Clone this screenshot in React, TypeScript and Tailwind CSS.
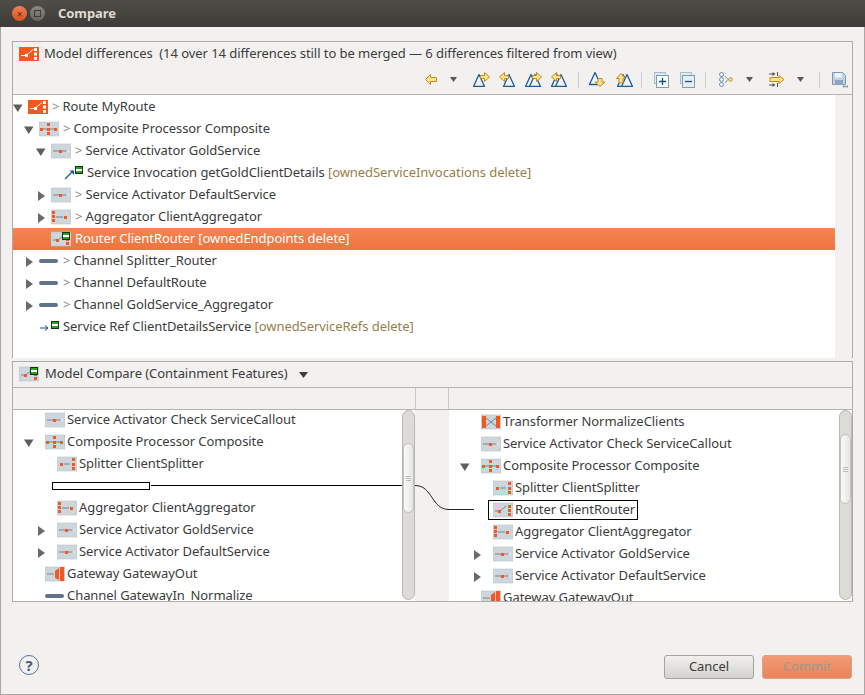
import type { ReactNode } from "react";

type IconKind =
  | "route"
  | "composite"
  | "activator"
  | "aggregator"
  | "splitter"
  | "router"
  | "gateway"
  | "transformer"
  | "channel"
  | "invocation"
  | "serviceRef";

function DeleteMark({ x = 11, y = 1 }: { x?: number; y?: number }) {
  return (
    <g>
      <rect x={x} y={y} width="8" height="8" fill="#0a3a0a" />
      <rect x={x + 1} y={y + 1} width="6" height="6" fill="#2fa01f" />
      <rect x={x + 1} y={y + 3} width="6" height="2" fill="#ffffff" />
    </g>
  );
}

function Dot({ x, y, s = 3 }: { x: number; y: number; s?: number }) {
  return <rect x={x} y={y} width={s} height={s} fill="#f4581f" />;
}

function ModelIcon({ kind, del }: { kind: IconKind; del?: boolean }) {
  return (
    <svg width="20" height="16" viewBox="0 0 20 16" className="shrink-0">
      {kind === "route" && (
        <g>
          <rect x="0" y="1" width="20" height="14" fill="#f4581f" />
          <path d="M2 9.500h5l7-6" stroke="#fff" strokeWidth="1" fill="none" />
          <rect x="6" y="8" width="3" height="3" fill="#fff" />
          <rect x="15" y="2" width="3" height="3" fill="#fff" />
          <rect x="15" y="6.500" width="3" height="3" fill="#fff" />
          <rect x="15" y="11" width="3" height="3" fill="#fff" />
        </g>
      )}
      {kind !== "route" && kind !== "channel" && kind !== "invocation" && kind !== "serviceRef" && (
        <rect x="0" y="1" width="20" height="14" fill="#cdd6dc" stroke="#b7c2c9" strokeWidth="0.6" />
      )}
      {kind === "composite" && (
        <g>
          <path d="M2 8h16" stroke="#77838c" strokeWidth="1" />
          <Dot x={1} y={7} />
          <Dot x={8} y={2} />
          <Dot x={8} y={7} />
          <Dot x={8} y={11} />
          <Dot x={15} y={7} />
        </g>
      )}
      {kind === "activator" && (
        <g>
          <path d="M2 8h14" stroke="#77838c" strokeWidth="1" />
          <Dot x={8} y={7} />
          <circle cx="17" cy="8" r="1.500" fill="#dfe4e7" />
        </g>
      )}
      {kind === "aggregator" && (
        <g>
          <Dot x={1} y={2} />
          <Dot x={1} y={6} />
          <Dot x={1} y={10} />
          <path d="M5 8h7" stroke="#77838c" strokeWidth="1" />
          <Dot x={13} y={7} />
        </g>
      )}
      {kind === "splitter" && (
        <g>
          <Dot x={3} y={7} />
          <path d="M7 8h6" stroke="#77838c" strokeWidth="1" />
          <Dot x={15} y={2} />
          <Dot x={15} y={7} />
          <Dot x={15} y={11} />
        </g>
      )}
      {kind === "router" && (
        <g>
          <path d="M2 9h5l6-5" stroke="#77838c" strokeWidth="1" fill="none" />
          <Dot x={5} y={8} />
          <Dot x={15} y={3} />
          <Dot x={15} y={7} />
          <Dot x={15} y={11} />
        </g>
      )}
      {kind === "gateway" && (
        <g>
          <path d="M2 8h7" stroke="#77838c" strokeWidth="1" />
          <path d="M10 5l4-3v12l-4-2z" fill="#f4581f" />
          <rect x="15" y="1" width="4" height="14" fill="#f4581f" />
        </g>
      )}
      {kind === "transformer" && (
        <g>
          <rect x="1" y="2" width="4" height="12" fill="#f4581f" />
          <rect x="15" y="2" width="4" height="12" fill="#f4581f" />
          <path d="M5 4l10 8M5 12l10-8" stroke="#77838c" strokeWidth="1" />
        </g>
      )}
      {kind === "channel" && <rect x="0" y="6" width="19" height="4" rx="2" fill="#5d7489" />}
      {kind === "invocation" && (
        <g>
          <path d="M1 14L9 6" stroke="#1f5d9c" strokeWidth="1.300" />
          <path d="M5.500 5.500h4.500v4.500z" fill="#1f5d9c" />
          <DeleteMark x={11} y={1} />
        </g>
      )}
      {kind === "serviceRef" && (
        <g>
          <path d="M0 9h7" stroke="#27406b" strokeWidth="1" />
          <path d="M5 6.500l3 2.500-3 2.500" stroke="#27406b" strokeWidth="1" fill="none" />
          <DeleteMark x={11} y={2} />
        </g>
      )}
      {del && kind !== "invocation" && kind !== "serviceRef" && <DeleteMark />}
    </svg>
  );
}

function Twisty({ open }: { open?: boolean }) {
  return (
    <svg width="10" height="10" viewBox="0 0 10 10" className="mt-[1px] shrink-0">
      {open ? <path d="M0 1.500h9.500L4.800 9z" fill="#5e5e5e" /> : <path d="M2 0v10L9 5z" fill="#6a6a6a" />}
    </svg>
  );
}

function TreeRow({
  left,
  icon,
  open,
  hasTwisty,
  del,
  selected,
  slot = "w-[15px]",
  gap = "ml-[4px]",
  children,
}: {
  left: string;
  icon: IconKind;
  open?: boolean;
  hasTwisty?: boolean;
  del?: boolean;
  selected?: boolean;
  slot?: string;
  gap?: string;
  children: ReactNode;
}) {
  return (
    <div className={`flex h-[22px] items-center whitespace-nowrap ${left} ${selected ? "bg-gradient-to-b from-[#f58550] to-[#ee7340] text-white" : ""}`}>
      <span className={`flex shrink-0 items-center ${slot}`}>{hasTwisty && <Twisty open={open} />}</span>
      <ModelIcon kind={icon} del={del} />
      <span className={gap}>{children}</span>
    </div>
  );
}

// rows of the two lower trees: wider twisty slot, tighter label
function CompareRow(props: { left: string; icon: IconKind; open?: boolean; hasTwisty?: boolean; children: ReactNode }) {
  return <TreeRow {...props} slot="w-[21px]" gap="ml-[2px]" />;
}

function Gt() {
  return <span className="mr-[3px] text-[#8a8a80]">&gt;</span>;
}

function Change({ children }: { children: ReactNode }) {
  return <span className="text-[#96804a]">{children}</span>;
}

function Tri({ x }: { x: number }) {
  return <path d={`M${x + 0.5} 14.500l5.500-12 5.500 12z`} fill="#eef4f9" stroke="#1d5c9b" strokeWidth="1.300" strokeLinejoin="round" />;
}

function GoldArrow({ d }: { d: string }) {
  return <path d={d} fill="#fbe38e" stroke="#c58a1a" strokeWidth="1" strokeLinejoin="round" />;
}

const arrowRight = "M7.500 3.500h4V0.500l5 4.500-5 4.500v-3h-4z";
const arrowLeft = "M9.500 3.500h-4V0.500l-5 4.500 5 4.500v-3h4z";

function Slot({ w, children }: { w: string; children?: ReactNode }) {
  return <span className={`flex shrink-0 items-center justify-center ${w}`}>{children}</span>;
}

function ToolIcon({ children }: { children: ReactNode }) {
  return (
    <svg width="17" height="15" viewBox="0 0 17 15">
      {children}
    </svg>
  );
}

function DropArrow({ w }: { w: string }) {
  return (
    <Slot w={w}>
      <svg width="7" height="5" viewBox="0 0 7 5">
        <path d="M0 0h7L3.500 5z" fill="#5a5a5a" />
      </svg>
    </Slot>
  );
}

function Sep({ w }: { w: string }) {
  return (
    <Slot w={w}>
      <span className="h-[16px] w-px bg-[#cfcdca]" />
    </Slot>
  );
}

function Toolbar() {
  return (
    <div className="flex h-[29px] items-center justify-end pr-[4px]">
      <Slot w="w-[23px]">
        <svg width="12" height="11" viewBox="0 0 12 11">
          <path d="M5.500 0.500L0.500 5.500 5.500 10.500V7.500H11.500V3.500H5.500z" fill="#fbe38e" stroke="#c58a1a" />
        </svg>
      </Slot>
      <DropArrow w="w-[23px]" />
      <span className="w-[3px] shrink-0" />
      <Slot w="w-[26px]">
        <ToolIcon>
          <Tri x={0} />
          <GoldArrow d={arrowRight} />
        </ToolIcon>
      </Slot>
      <Slot w="w-[26px]">
        <ToolIcon>
          <Tri x={4} />
          <GoldArrow d={arrowLeft} />
        </ToolIcon>
      </Slot>
      <Slot w="w-[26px]">
        <ToolIcon>
          <Tri x={0} />
          <Tri x={4} />
          <GoldArrow d={arrowRight} />
        </ToolIcon>
      </Slot>
      <Slot w="w-[26px]">
        <ToolIcon>
          <Tri x={0} />
          <Tri x={4} />
          <GoldArrow d={arrowLeft} />
        </ToolIcon>
      </Slot>
      <Sep w="w-[13px]" />
      <Slot w="w-[25px]">
        <ToolIcon>
          <path d="M0.500 12.500l5.500-12 5.500 12z" fill="#eef4f9" stroke="#1d5c9b" strokeWidth="1.300" strokeLinejoin="round" />
          <GoldArrow d="M9 6.500h4v3.500h3l-5 4.500-5-4.500h3z" />
        </ToolIcon>
      </Slot>
      <Slot w="w-[28px]">
        <ToolIcon>
          <Tri x={1} />
          <Tri x={5} />
          <GoldArrow d="M3 11V6.500H0.500L5 1.500l4.500 5H7V11z" />
        </ToolIcon>
      </Slot>
      <Sep w="w-[7px]" />
      <Slot w="w-[33px]">
        <svg width="16" height="16" viewBox="0 0 16 16">
          <rect x="0.500" y="0.500" width="11" height="11" fill="#dfe9f0" stroke="#a5bfd0" />
          <rect x="2.500" y="3.500" width="12" height="12" fill="#f7fafc" stroke="#7e9db3" />
          <path d="M8.500 6v7M5 9.500h7" stroke="#1f4f7d" strokeWidth="1.300" />
        </svg>
      </Slot>
      <Slot w="w-[19px]">
        <svg width="16" height="16" viewBox="0 0 16 16">
          <rect x="0.500" y="0.500" width="11" height="11" fill="#dfe9f0" stroke="#a5bfd0" />
          <rect x="2.500" y="3.500" width="12" height="12" fill="#e6eef3" stroke="#7e9db3" />
          <path d="M5 9.500h7" stroke="#1f4f7d" strokeWidth="1.300" />
        </svg>
      </Slot>
      <Sep w="w-[17px]" />
      <Slot w="w-[23px]">
        <svg width="14" height="15" viewBox="0 0 14 15">
          <g fill="none" stroke="#6f8fb5">
            <circle cx="2.500" cy="2.500" r="2" />
            <circle cx="2.500" cy="7.500" r="2" />
            <circle cx="2.500" cy="12.500" r="2" />
            <path d="M6 4l3 3.500-3 3.500" />
          </g>
          <circle cx="11.500" cy="7.500" r="1.800" fill="#f8e08a" stroke="#c58a1a" />
        </svg>
      </Slot>
      <DropArrow w="w-[24px]" />
      <Slot w="w-[31px]">
        <svg width="16" height="15" viewBox="0 0 16 15">
          <path d="M0 2h5M0 13h5" stroke="#555" />
          <path d="M3.500 0l3 2-3 2zM3.500 11l3 2-3 2z" fill="#555" />
          <path d="M8.500 0v4M8.500 11v4" stroke="#555" />
          <path d="M1 5.500h9V3.500l5 4-5 4v-2H1z" fill="#fbe38e" stroke="#c58a1a" />
        </svg>
      </Slot>
      <DropArrow w="w-[16px]" />
      <Sep w="w-[23px]" />
      <Slot w="w-[17px]">
        <svg width="16" height="16" viewBox="0 0 16 16">
          <path d="M0.500 0.500h10l3 3v9h-13z" fill="#c3d2e2" stroke="#7f97b5" />
          <rect x="3" y="1" width="7" height="4.500" fill="#eef3f8" />
          <rect x="3" y="8" width="8" height="5" fill="#8ea6bf" />
          <path d="M11 14.500h1.500M13.500 14.500h1M15.200 14.500h0.800" stroke="#345a8a" strokeWidth="1.400" />
        </svg>
      </Slot>
    </div>
  );
}

function TreeScrollbar({ offset }: { offset: string }) {
  return (
    <div className={`flex h-full w-[13px] shrink-0 flex-col rounded-full border border-[#b9b7b3] bg-[#dcdbd8] ${offset}`}>
      <div className="flex h-[70px] shrink-0 flex-col items-center justify-center gap-px rounded-full border border-[#c3c1bd] bg-gradient-to-r from-[#fbfbfa] to-[#e6e5e3]">
        <span className="h-px w-[5px] bg-[#bdbbb8]" />
        <span className="h-px w-[5px] bg-[#bdbbb8]" />
        <span className="h-px w-[5px] bg-[#bdbbb8]" />
      </div>
    </div>
  );
}

export default function App() {
  return (
    <div className="flex h-[695px] w-[865px] flex-col overflow-hidden bg-[#f2f1f0] font-['Ubuntu','Noto_Sans',sans-serif] text-[13px] tracking-[-0.06px] text-[#3c3c3c]">
      {/* title bar */}
      <div className="flex h-[27px] shrink-0 items-center bg-gradient-to-b from-[#4f4d47] to-[#3c3b37] pl-[12px]">
        <span className="flex h-[15px] w-[15px] items-center justify-center rounded-full bg-gradient-to-b from-[#f0804f] to-[#d9521f] text-[10px] leading-none text-[#5c2a12]">
          ×
        </span>
        <span className="ml-[3px] flex h-[15px] w-[15px] items-center justify-center rounded-full bg-gradient-to-b from-[#8a8983] to-[#65645f]">
          <span className="h-[7px] w-[7px] border border-[#3e3d39]" />
        </span>
        <span className="ml-[13px] text-[13px] font-bold text-[#dfdbd2]">Compare</span>
      </div>

      <div className="flex flex-1 flex-col border-x border-b border-x-[#a9a7a3] border-b-[#a9a7a3] px-[11px]">
        {/* top panel */}
        <div className="mt-[14px] flex h-[317px] shrink-0 flex-col border-l border-r border-t border-[#aeaca8]">
          <div className="h-[53px] shrink-0 border-b border-[#b5b3af]">
            <div className="flex h-[23px] items-center pl-[6px]">
              <ModelIcon kind="route" />
              <span className="ml-[5px] whitespace-pre">Model differences  (14 over 14 differences still to be merged — 6 differences filtered from view)</span>
            </div>
            <Toolbar />
          </div>
          <div className="flex min-h-0 flex-1">
            <div className="flex-1 bg-white pt-[1px]">
              <TreeRow left="pl-0" icon="route" hasTwisty open>
                <Gt />Route MyRoute
              </TreeRow>
              <TreeRow left="pl-[11px]" icon="composite" hasTwisty open>
                <Gt />Composite Processor Composite
              </TreeRow>
              <TreeRow left="pl-[23px]" icon="activator" hasTwisty open>
                <Gt />Service Activator GoldService
              </TreeRow>
              <TreeRow left="pl-[36px]" icon="invocation" gap="ml-[3px]">
                Service Invocation getGoldClientDetails <Change>[ownedServiceInvocations delete]</Change>
              </TreeRow>
              <TreeRow left="pl-[23px]" icon="activator" hasTwisty>
                <Gt />Service Activator DefaultService
              </TreeRow>
              <TreeRow left="pl-[23px]" icon="aggregator" hasTwisty>
                <Gt />Aggregator ClientAggregator
              </TreeRow>
              <TreeRow left="pl-[23px]" icon="router" del selected>
                Router ClientRouter [ownedEndpoints delete]
              </TreeRow>
              <TreeRow left="pl-[11px]" icon="channel" hasTwisty>
                <Gt />Channel Splitter_Router
              </TreeRow>
              <TreeRow left="pl-[11px]" icon="channel" hasTwisty>
                <Gt />Channel DefaultRoute
              </TreeRow>
              <TreeRow left="pl-[11px]" icon="channel" hasTwisty>
                <Gt />Channel GoldService_Aggregator
              </TreeRow>
              <TreeRow left="pl-[12px]" icon="serviceRef" gap="ml-[3px]">
                Service Ref ClientDetailsService <Change>[ownedServiceRefs delete]</Change>
              </TreeRow>
            </div>
            <div className="w-[17px] shrink-0" />
          </div>
        </div>

        {/* bottom panel */}
        <div className="mt-[3px] flex h-[241px] shrink-0 flex-col border border-[#aeaca8]">
          <div className="flex h-[26px] shrink-0 items-center border-b border-[#b5b3af] pb-[2px] pl-[6px]">
            <ModelIcon kind="router" del />
            <span className="ml-[6px]">Model Compare (Containment Features)</span>
            <svg width="9" height="6" viewBox="0 0 9 6" className="ml-[11px] mt-[3px]">
              <path d="M0 0h9L4.500 6z" fill="#3c3c3c" />
            </svg>
          </div>
          <div className="flex h-[22px] shrink-0 border-b border-[#b5b3af]">
            <div className="w-[402px] shrink-0" />
            <div className="w-[34px] shrink-0 border-x border-[#c9c7c3]" />
            <div className="flex-1" />
          </div>
          <div className="relative flex min-h-0 flex-1 overflow-hidden">
            {/* left side */}
            <div className="flex w-[402px] shrink-0 bg-white">
              <div className="-mt-px min-w-0 flex-1 overflow-hidden">
                <CompareRow left="pl-[11px]" icon="activator">Service Activator Check ServiceCallout</CompareRow>
                <CompareRow left="pl-[11px]" icon="composite" hasTwisty open>Composite Processor Composite</CompareRow>
                <CompareRow left="pl-[23px]" icon="splitter">Splitter ClientSplitter</CompareRow>
                <div className="flex h-[22px] items-center pl-[39px]">
                  <span className="h-[8px] w-[98px] border border-black bg-white" />
                </div>
                <CompareRow left="pl-[23px]" icon="aggregator">Aggregator ClientAggregator</CompareRow>
                <CompareRow left="pl-[23px]" icon="activator" hasTwisty>Service Activator GoldService</CompareRow>
                <CompareRow left="pl-[23px]" icon="activator" hasTwisty>Service Activator DefaultService</CompareRow>
                <CompareRow left="pl-[11px]" icon="gateway">Gateway GatewayOut</CompareRow>
                <CompareRow left="pl-[11px]" icon="channel">Channel GatewayIn_Normalize</CompareRow>
              </div>
              <div className="w-[13px] shrink-0 pb-px">
                <TreeScrollbar offset="pt-[32px]" />
              </div>
            </div>
            {/* center gutter */}
            <div className="w-[34px] shrink-0 bg-[#f2f1f0]" />
            {/* right side */}
            <div className="flex min-w-0 flex-1 bg-white">
              <div className="min-w-0 flex-1 overflow-hidden pt-[1px]">
                <CompareRow left="pl-[11px]" icon="transformer">Transformer NormalizeClients</CompareRow>
                <CompareRow left="pl-[11px]" icon="activator">Service Activator Check ServiceCallout</CompareRow>
                <CompareRow left="pl-[11px]" icon="composite" hasTwisty open>Composite Processor Composite</CompareRow>
                <CompareRow left="pl-[23px]" icon="splitter">Splitter ClientSplitter</CompareRow>
                <div className="flex h-[22px] items-center whitespace-nowrap pl-[39px]">
                  <span className="flex h-[20px] items-center border border-black pl-[4px] pr-[2px]">
                    <ModelIcon kind="router" />
                    <span className="ml-[2px]">Router ClientRouter</span>
                  </span>
                </div>
                <CompareRow left="pl-[23px]" icon="aggregator">Aggregator ClientAggregator</CompareRow>
                <CompareRow left="pl-[23px]" icon="activator" hasTwisty>Service Activator GoldService</CompareRow>
                <CompareRow left="pl-[23px]" icon="activator" hasTwisty>Service Activator DefaultService</CompareRow>
                <CompareRow left="pl-[11px]" icon="gateway">Gateway GatewayOut</CompareRow>
              </div>
              <div className="w-[13px] shrink-0 pb-px">
                <TreeScrollbar offset="pt-[23px]" />
              </div>
            </div>
            {/* diff connector over the gutter */}
            <svg className="pointer-events-none absolute left-0 top-0" width="480" height="120" viewBox="0 0 480 120">
              <path d="M138 75.500H389" stroke="#000" strokeWidth="1" fill="none" />
              <path d="M402 75.500C420 75.500 418 99.500 436 99.500H461" stroke="#222" strokeWidth="1" fill="none" />
            </svg>
          </div>
        </div>

        {/* footer */}
        <div className="flex flex-1 items-start justify-between pl-[7px] pr-[1px] pt-[53px]">
          <span className="flex h-[20px] w-[20px] items-center justify-center rounded-full border-[1.5px] border-[#5a7590] text-[15px] font-bold leading-none text-[#3f5d7d]">
            ?
          </span>
          <div className="flex gap-[8px]">
            <button className="h-[24px] w-[90px] rounded-[3px] border border-[#a5a39f] bg-gradient-to-b from-[#f1f0ef] to-[#d3d2cf] text-[13px] text-[#3c3c3c]">
              Cancel
            </button>
            <button className="h-[24px] w-[90px] rounded-[3px] border border-[#d7a488] bg-gradient-to-b from-[#f29a76] to-[#ec825a] text-[13px] text-[#9b9a88]">
              Commit
            </button>
          </div>
        </div>
      </div>
    </div>
  );
}
